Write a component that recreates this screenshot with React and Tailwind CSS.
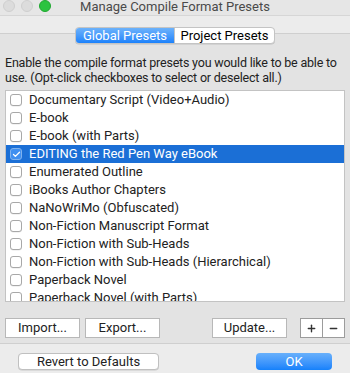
import { Check, Minus, Plus } from "lucide-react";

const presets = [
  "Documentary Script (Video+Audio)",
  "E-book",
  "E-book (with Parts)",
  "EDITING the Red Pen Way eBook",
  "Enumerated Outline",
  "iBooks Author Chapters",
  "NaNoWriMo (Obfuscated)",
  "Non-Fiction Manuscript Format",
  "Non-Fiction with Sub-Heads",
  "Non-Fiction with Sub-Heads (Hierarchical)",
  "Paperback Novel",
  "Paperback Novel (with Parts)",
];

const selected = 3;

export default function App() {
  return (
    <div
      className="flex h-[373px] w-[350px] flex-col overflow-hidden bg-[#ececec] text-[13px] text-[#222]"
      style={{ fontFamily: "Roboto, 'Liberation Sans', sans-serif" }}
    >
      {/* title bar */}
      <div className="relative flex h-[16px] shrink-0 items-start border-b border-[#d6d6d6] bg-[#e6e6e6]">
        <div className="absolute left-[3px] top-0 flex gap-[6px]">
          <span className="h-[12px] w-[12px] rounded-full border border-[#cfcfcf] bg-[#dcdcdc]" />
          <span className="h-[12px] w-[12px] rounded-full border border-[#cfcfcf] bg-[#dcdcdc]" />
          <span className="h-[12px] w-[12px] rounded-full border border-[#20a830] bg-[#2cc340]" />
        </div>
        <div className="w-full text-center leading-[14px] text-[#4a4a4a]">Manage Compile Format Presets</div>
      </div>

      {/* tab box */}
      <div className="mt-[17px] flex shrink-0 flex-col border-y border-[#cfcfcf] bg-[#e3e3e3]">
        <div className="-mt-[7px] flex justify-center">
          <div className="flex h-[17px] overflow-hidden rounded-[4px] border border-[#c4c4c4] bg-white leading-[15px] shadow-[0_0.5px_0.5px_rgba(0,0,0,0.15)]">
            <div className="w-[98px] bg-gradient-to-b from-[#6cb2fb] to-[#1a82fb] text-center text-white">Global Presets</div>
            <div className="w-[100px] border-l border-[#c4c4c4] text-center text-black">Project Presets</div>
          </div>
        </div>

        <p className="mt-[11px] h-[30px] whitespace-nowrap px-[5px] text-[12.5px] leading-[15px] tracking-[-0.2px]">
          Enable the compile format presets you would like to be able to
          <br />
          use. (Opt-click checkboxes to select or deselect all.)
        </p>

        <div className="mx-[5px] mt-[5px] h-[212px] shrink-0 overflow-hidden border border-[#c3c3c3] bg-white">
          {presets.map((name, i) => (
            <div
              key={name}
              className={
                i === selected
                  ? "flex h-[18px] items-center gap-[7px] bg-[#1b6fd6] pl-[4px] text-white"
                  : "flex h-[18px] items-center gap-[7px] pl-[4px]"
              }
            >
              {i === selected ? (
                <span className="grid h-[12px] w-[12px] place-items-center rounded-[3px] border border-[#7fb2ee] bg-[#3f8ff0]">
                  <Check size={9} strokeWidth={3.5} className="text-white" />
                </span>
              ) : (
                <span className="h-[12px] w-[12px] rounded-[3px] border border-[#a8a8a8] bg-white shadow-[0_0.5px_0.5px_rgba(0,0,0,0.1)]" />
              )}
              <span className="whitespace-nowrap">{name}</span>
            </div>
          ))}
        </div>

        <div className="mb-[5px] mt-[16px] flex items-center px-[5px]">
          <button className="h-[20px] w-[75px] border border-[#b8b8b8] bg-white leading-[18px]">Import...</button>
          <button className="ml-[5px] h-[20px] w-[75px] border border-[#b8b8b8] bg-white leading-[18px]">Export...</button>
          <button className="ml-auto h-[20px] w-[75px] border border-[#b8b8b8] bg-white leading-[18px]">Update...</button>
          <div className="ml-[13px] flex h-[20px] w-[45px] border border-[#9c9c9c] bg-white">
            <span className="grid flex-1 place-items-center">
              <Plus size={11} strokeWidth={3} className="text-[#333]" />
            </span>
            <span className="grid flex-1 place-items-center border-l border-[#9c9c9c]">
              <Minus size={11} strokeWidth={3} className="text-[#333]" />
            </span>
          </div>
        </div>
      </div>

      {/* bottom buttons */}
      <div className="mt-[9px] flex items-center px-[18px]">
        <button className="h-[17px] w-[141px] rounded-[4px] border border-[#c0c0c0] bg-white leading-[15px] shadow-[0_0.5px_0.5px_rgba(0,0,0,0.15)]">
          Revert to Defaults
        </button>
        <button className="ml-auto h-[17px] w-[76px] rounded-[4px] bg-gradient-to-b from-[#68b0fb] to-[#1381fb] leading-[17px] text-white">
          OK
        </button>
      </div>
    </div>
  );
}
